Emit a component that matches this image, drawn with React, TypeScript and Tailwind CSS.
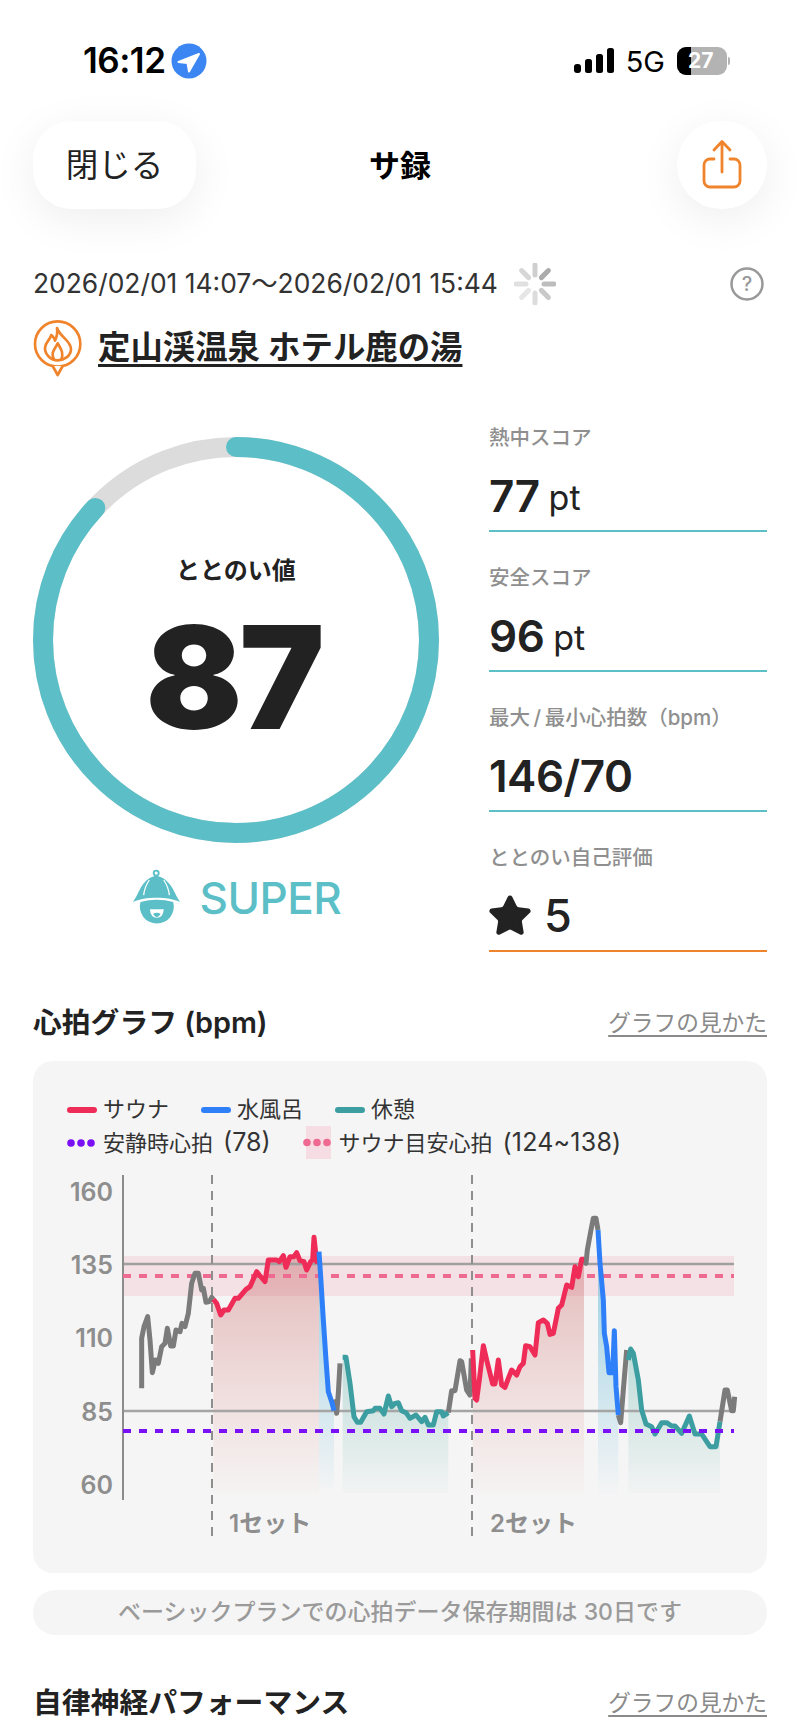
import { Star } from "lucide-react";

type Pt = [number, number];
const parse = (s: string, ox: number, oy: number): Pt[] =>
  s.trim().split(/\s+/).map((t) => {
    const [x, y] = t.split(",").map(Number);
    return [ox + x / 3, oy + y / 3] as Pt;
  });
const str = (p: Pt[]) => p.map((q) => q.join(",")).join(" ");
const area = (p: Pt[], base: number) =>
  str([...p, [p[p.length - 1][0], base], [p[0][0], base]]);

const A = [120, 1220] as const;
const B = [460, 1200] as const;

const gray1 = parse("65,505 65,355 72,320 83,290 90,360 97,458 106,420 115,430 125,380 135,370 142,325 152,378 160,378 168,330 180,335 186,310 195,320 205,280 215,190 225,160 235,160 245,210 250,205 258,247 268,245 275,232 280,238", A[0], A[1]);
const red1 = parse("280,238 290,250 302,285 312,270 325,270 345,235 355,235 378,208 390,200 410,155 418,165 435,185 445,120 470,120 478,125 490,107 498,142 510,110 522,110 530,98 540,122 552,125 560,150 572,125 578,120 582,52 590,125 597,125", A[0], A[1]);
const blue1 = parse("597,95 602,170 610,300 618,420 625,515 635,545 642,572", A[0], A[1]);
const gray2 = parse("642,572 645,545 650,580 655,520 660,430", A[0], A[1]);
const teal1 = parse("668,412 678,412 690,490 702,590 712,607 722,607 740,575 760,572 765,565 780,565 792,582 805,528 815,560 825,550 835,548 845,572 858,578 870,595 888,585 905,605 915,592 925,615 940,615 950,575 965,575 970,588 985,578", A[0], A[1]);
const gray3 = parse("985,578 995,512 1005,512 1020,422 1025,425 1040,510 1050,525 1054,415", A[0], A[1]);
const red2 = parse("38,450 45,595 50,600 58,540 70,437 80,480 98,552 105,552 115,480 125,555 135,562 145,535 155,510 170,525 180,500 190,490 197,437 210,440 225,465 235,368 250,360 262,370 270,403 280,400 290,350 295,325 305,315 320,255 335,262 345,200 355,230 365,178 372,178", B[0], B[1]);
const gray4 = parse("372,178 378,190 382,150 392,95 400,55 408,55 414,90", B[0], B[1]);
const blue2 = parse("414,90 420,190 430,300 433,400 440,440 447,518 458,518 463,392 468,560 475,645", B[0], B[1]);
const gray5 = parse("475,645 482,668 490,570 500,450", B[0], B[1]);
const teal2 = parse("505,480 512,447 520,460 535,540 545,630 558,672 575,680 585,702 605,668 620,668 635,678 645,678 665,700 688,648 705,702 725,702 750,740 768,740 780,665", B[0], B[1]);
const gray6 = parse("780,665 795,570 802,570 815,632 820,632 824,590", B[0], B[1]);

const SPOKES = ["#cfcfcf", "#ababab", "#bdbdbd", "#c9c9c9", "#dcdcdc", "#e6e6e6", "#e0e0e0", "#d6d6d6"];

function Chart() {
  const ticks: [string, number][] = [["160", 1192], ["135", 1265], ["110", 1338], ["85", 1412], ["60", 1485]];
  return (
    <svg className="block w-[734px] h-[395px]" viewBox="33 1165 734 395">
      <defs>
        <linearGradient id="gr" gradientUnits="userSpaceOnUse" x1="0" y1="1260" x2="0" y2="1493">
          <stop offset="0" stopColor="#c05050" stopOpacity="0.36" />
          <stop offset="1" stopColor="#e67878" stopOpacity="0.02" />
        </linearGradient>
        <linearGradient id="gb" gradientUnits="userSpaceOnUse" x1="0" y1="1300" x2="0" y2="1488">
          <stop offset="0" stopColor="#6ebedc" stopOpacity="0.55" />
          <stop offset="1" stopColor="#6ebedc" stopOpacity="0.02" />
        </linearGradient>
        <linearGradient id="gt" gradientUnits="userSpaceOnUse" x1="0" y1="1340" x2="0" y2="1493">
          <stop offset="0" stopColor="#50aaa0" stopOpacity="0.36" />
          <stop offset="1" stopColor="#50aaa0" stopOpacity="0.02" />
        </linearGradient>
      </defs>
      <rect x="123" y="1256" width="611" height="40" fill="#eb5a82" fillOpacity="0.13" />
      <polygon points={area(red1, 1493)} fill="url(#gr)" />
      <polygon points={area(blue1, 1488)} fill="url(#gb)" />
      <polygon points={area(teal1, 1493)} fill="url(#gt)" />
      <polygon points={area(red2, 1493)} fill="url(#gr)" />
      <polygon points={area(blue2, 1493)} fill="url(#gb)" />
      <polygon points={area(teal2, 1493)} fill="url(#gt)" />
      <line x1="123" y1="1264" x2="734" y2="1264" stroke="#a0a0a0" strokeWidth="2.5" />
      <line x1="123" y1="1411" x2="734" y2="1411" stroke="#a5a5a5" strokeWidth="2.5" />
      <line x1="123" y1="1175" x2="123" y2="1500" stroke="#8c8c8c" strokeWidth="2" />
      <line x1="212" y1="1175" x2="212" y2="1542" stroke="#8e8e8e" strokeWidth="2" strokeDasharray="9 7" />
      <line x1="472" y1="1175" x2="472" y2="1542" stroke="#8e8e8e" strokeWidth="2" strokeDasharray="9 7" />
      <line x1="123" y1="1276" x2="734" y2="1276" stroke="#ee6a90" strokeWidth="4" strokeDasharray="8 8" />
      <g fill="none" strokeWidth="5" strokeLinejoin="round">
        {[gray1, gray2, gray3, gray4, gray5, gray6].map((p, i) => (
          <polyline key={i} points={str(p)} stroke="#7b7b7b" />
        ))}
        <polyline points={str(red1)} stroke="#ee2c57" />
        <polyline points={str(red2)} stroke="#ee2c57" />
        <polyline points={str(blue1)} stroke="#2f80f8" />
        <polyline points={str(blue2)} stroke="#2f80f8" />
        <polyline points={str(teal1)} stroke="#3c9ea1" />
        <polyline points={str(teal2)} stroke="#3c9ea1" />
      </g>
      <line x1="123" y1="1431" x2="734" y2="1431" stroke="#7a10f5" strokeWidth="4" strokeDasharray="8 8" />
      {ticks.map(([t, y]) => (
        <text key={t} x="113" y={y + 9} textAnchor="end" fontSize="25" fontWeight="600" fill="#8e8e8e">{t}</text>
      ))}
      <text x="229" y="1532" fontSize="24" fontWeight="600" fill="#8e8e8e">1セット</text>
      <text x="490" y="1532" fontSize="24" fontWeight="600" fill="#8e8e8e">2セット</text>
    </svg>
  );
}

function Stat({ label, value, unit, accent }: { label: string; value: string; unit?: string; accent: string }) {
  return (
    <div className={`h-[107px] flex flex-col border-b-2 ${accent}`}>
      <div className="h-[26px] leading-[26px] text-[20.5px] font-medium text-[#8f8f8f] whitespace-nowrap">{label}</div>
      <div className="mt-[17px] h-[56px] flex items-center text-[#222222]">
        <span className="text-[44px] leading-[56px] font-semibold tracking-[-0.5px]">{value}</span>
        {unit && <span className="ml-[9px] text-[34px] leading-[56px] mt-[4px]">{unit}</span>}
      </div>
    </div>
  );
}

function SectionHead({ title, mt }: { title: string; mt: string }) {
  return (
    <div className={`${mt} h-[40px] px-[33px] flex items-center justify-between`}>
      <div className="text-[28.8px] font-semibold text-[#222222] whitespace-nowrap">{title}</div>
      <div className="text-[22.7px] text-[#8a8a8a] underline underline-offset-[4px] whitespace-nowrap">グラフの見かた</div>
    </div>
  );
}

export default function App() {
  return (
    <div className="w-[800px] h-[1734px] overflow-hidden bg-white text-[#222222] font-['Inter','Noto_Sans_CJK_JP',sans-serif]">
      {/* status bar */}
      <div className="h-[121px] pl-[83px] pr-[70px] flex items-center justify-between">
        <div className="flex items-center">
          <span className="text-[35px] font-semibold text-black tracking-[-0.5px]">16:12</span>
          <svg className="ml-[6px] w-[36px] h-[36px]" viewBox="-18 -18 36 36">
            <circle r="17.5" fill="#3b86f2" />
            <path d="M10 -7 L-10.5 1 L-1.5 2 L0 10.5 Z" fill="white" stroke="white" strokeWidth="2" strokeLinejoin="round" />
          </svg>
        </div>
        <div className="flex items-center">
          <svg className="w-[40px] h-[26px]" viewBox="0 0 40 26">
            <rect x="0" y="16" width="7" height="9" rx="3" fill="black" />
            <rect x="11" y="11" width="7" height="14" rx="2.5" fill="black" />
            <rect x="22" y="6" width="7" height="19" rx="2.5" fill="black" />
            <rect x="33" y="0" width="7" height="25" rx="2.5" fill="black" />
          </svg>
          <span className="ml-[12px] text-[29px] font-normal text-black mt-[2px]">5G</span>
          <div className="ml-[12px] relative w-[50px] h-[28px] rounded-[9px] overflow-hidden bg-[#b3b3b3]">
            <div className="w-[14px] h-full bg-black" />
            <span className="absolute left-[11px] top-0 leading-[28px] text-[21px] font-bold text-white">27</span>
          </div>
          <div className="ml-[1px] w-[2px] h-[8px] rounded-r bg-[#b3b3b3]" />
        </div>
      </div>

      {/* header */}
      <div className="h-[88px] px-[33px] grid grid-cols-[1fr_auto_1fr] items-center">
        <div className="justify-self-start w-[163px] h-[88px] pt-[2px] rounded-[38px] bg-white shadow-[0_10px_45px_rgba(0,0,0,0.07)] flex items-center justify-center text-[32.5px] text-[#222222]">閉じる</div>
        <div className="pt-[2px] text-[31px] font-bold text-black">サ録</div>
        <div className="justify-self-end w-[90px] h-[88px] rounded-full bg-white shadow-[0_10px_45px_rgba(0,0,0,0.07)] flex items-center justify-center">
          <svg className="w-[42px] h-[52px]" viewBox="0 0 42 52" fill="none" stroke="#f0842c" strokeWidth="2.8" strokeLinecap="round" strokeLinejoin="round">
            <path d="M21 33 V3 M13 11 L21 2.5 L29 11" />
            <path d="M13 20 H9 a6 6 0 0 0 -6 6 V42 a6 6 0 0 0 6 6 H33 a6 6 0 0 0 6 -6 V26 a6 6 0 0 0 -6 -6 H29" />
          </svg>
        </div>
      </div>

      {/* date row */}
      <div className="mt-[55px] h-[40px] px-[33px] flex items-center">
        <span className="text-[26.4px] text-[#333333] whitespace-nowrap">2026/02/01 14:07～2026/02/01 15:44</span>
        <svg className="ml-[16px] w-[42px] h-[42px]" viewBox="-21 -21 42 42">
          {SPOKES.map((c, i) => (
            <line key={i} x1="0" y1="-9" x2="0" y2="-19" stroke={c} strokeWidth="5" strokeLinecap="round" transform={`rotate(${i * 45})`} />
          ))}
        </svg>
        <svg className="ml-auto mr-[3px] w-[34px] h-[34px]" viewBox="0 0 34 34">
          <circle cx="17" cy="17" r="15.5" fill="none" stroke="#999999" strokeWidth="2.5" />
          <text x="17" y="24" textAnchor="middle" fontSize="20" fontWeight="500" fill="#999999">?</text>
        </svg>
      </div>

      {/* venue */}
      <div className="mt-[16px] h-[56px] pl-[33px] flex items-center">
        <svg className="w-[50px] h-[58px]" viewBox="38 25 150 174" fill="none" stroke="#f0842c" strokeWidth="8" strokeLinejoin="round">
          <circle cx="112" cy="100" r="68" strokeWidth="8" />
          <path d="M97 166 L112 193 L127 166" strokeWidth="8" fill="white" />
          <path d="M110 52 C118 78 152 90 152 115 C152 137 130 149 112 149 C92 149 74 132 74 112 C74 95 88 90 93 73 C98 78 104 84 104 90 C109 80 112 65 110 52 Z" />
          <path d="M102 149 C88 125 105 115 112 98 C122 115 132 128 122 149" />
        </svg>
        <span className="ml-[15px] text-[32.4px] font-semibold text-[#222222] underline decoration-[3px] underline-offset-[5px] whitespace-nowrap">定山渓温泉 ホテル鹿の湯</span>
      </div>

      {/* score block */}
      <div className="mt-[49px] px-[33px] flex justify-between">
        <div className="w-[406px] pt-[12px] flex flex-col items-center">
          <div className="relative w-[406px] h-[406px] flex flex-col items-center">
            <svg className="absolute inset-0 w-[406px] h-[406px] -rotate-90" viewBox="0 0 406 406" fill="none">
              <circle cx="203" cy="203" r="193" stroke="#dcdcdc" strokeWidth="20" />
              <circle cx="203" cy="203" r="193" stroke="#5cbfc7" strokeWidth="20" strokeLinecap="round" pathLength="100" strokeDasharray="87 100" />
            </svg>
            <div className="relative mt-[116px] h-[36px] leading-[36px] text-[24px] font-semibold text-[#222222]">ととのい値</div>
            <div className="relative mt-[13px] h-[150px] leading-[150px] pr-[5px] text-[143px] font-black text-[#222222] tracking-[-3px]">87</div>
          </div>
          <div className="mt-[26px] h-[56px] flex items-center">
            <svg className="w-[52px] h-[56px]" viewBox="30 25 165 178">
              <circle cx="110" cy="38" r="8" fill="none" stroke="#5cbfc7" strokeWidth="6" />
              <path d="M36 130 C58 104 58 60 110 46 C162 60 166 104 186 130 C150 112 72 112 36 130 Z" fill="#5cbfc7" />
              <path d="M88 60 C78 75 72 90 70 108 M134 60 C144 75 150 90 152 108" stroke="white" strokeWidth="4" fill="none" />
              <path d="M60 130 Q112 116 164 130 A54 54 0 1 1 60 130 Z" fill="#5cbfc7" />
              <path d="M90 153 L134 153 Q132 180 112 180 Q92 180 90 153 Z" fill="white" />
              <path d="M100 168 Q112 160 124 168 Q118 178 112 178 Q106 178 100 168 Z" fill="#5cbfc7" />
            </svg>
            <span className="ml-[17px] mt-[2px] text-[44px] font-medium text-[#5cbfc7] tracking-[-0.5px]">SUPER</span>
          </div>
        </div>
        <div className="w-[278px] flex flex-col gap-[33px]">
          <Stat label="熱中スコア" value="77" unit="pt" accent="border-[#5cc0c8]" />
          <Stat label="安全スコア" value="96" unit="pt" accent="border-[#5cc0c8]" />
          <Stat label={"最大\u2009/\u2009最小心拍数（bpm）"} value="146/70" accent="border-[#5cc0c8]" />
          <div className="h-[107px] flex flex-col border-b-2 border-[#f0842c]">
            <div className="h-[26px] leading-[26px] text-[20.5px] font-medium text-[#8f8f8f]">ととのい自己評価</div>
            <div className="mt-[17px] h-[56px] flex items-center text-[#222222]">
              <Star className="w-[46px] h-[46px] -ml-[2px]" fill="#222222" stroke="#222222" strokeWidth={1.5} />
              <span className="ml-[11px] text-[45px] leading-[56px] font-medium">5</span>
            </div>
          </div>
        </div>
      </div>

      <SectionHead title="心拍グラフ (bpm)" mt="mt-[51px]" />

      {/* chart card */}
      <div className="mt-[18px] mx-[33px] h-[512px] rounded-[20px] bg-[#f5f5f5] overflow-hidden">
        <div className="pt-[32px] px-[34px] text-[22px] text-[#333333]">
          <div className="h-[33px] flex items-center gap-[32px]">
            {[["サウナ", "bg-[#ee2c57]"], ["水風呂", "bg-[#2f80f8]"], ["休憩", "bg-[#3c9ea1]"]].map(([t, c]) => (
              <div key={t} className="flex items-center gap-[6px]">
                <span className={`w-[30px] h-[6px] rounded-full ${c}`} />
                <span>{t}</span>
              </div>
            ))}
          </div>
          <div className="h-[33px] flex items-center gap-[32px]">
            <div className="flex items-center gap-[8px]">
              <svg className="w-[28px] h-[8px]" viewBox="0 0 28 8">
                <circle cx="4" cy="4" r="3.8" fill="#7a10f5" /><circle cx="14" cy="4" r="3.8" fill="#7a10f5" /><circle cx="24" cy="4" r="3.8" fill="#7a10f5" />
              </svg>
              <span className="whitespace-nowrap">安静時心拍<span className="ml-[10px] text-[25px]">(78)</span></span>
            </div>
            <div className="flex items-center gap-[8px]">
              <svg className="w-[28px] h-[33px]" viewBox="0 0 28 33">
                <rect x="3" y="0" width="25" height="33" fill="#f5dde3" />
                <circle cx="4" cy="16.5" r="3.8" fill="#ee6a90" /><circle cx="14" cy="16.5" r="3.8" fill="#ee6a90" /><circle cx="24" cy="16.5" r="3.8" fill="#ee6a90" />
              </svg>
              <span className="whitespace-nowrap">サウナ目安心拍<span className="ml-[10px] text-[25px] tracking-[0.2px]">(124~138)</span></span>
            </div>
          </div>
        </div>
        <div className="mt-[6px]"><Chart /></div>
      </div>

      {/* note */}
      <div className="mt-[17px] mx-[33px] h-[45px] rounded-[22px] bg-[#f5f5f5] flex items-center justify-center text-[23px] font-medium text-[#9a9a9a] whitespace-nowrap">
        ベーシックプランでの心拍データ保存期間は 30日です
      </div>

      <SectionHead title="自律神経パフォーマンス" mt="mt-[48px]" />
    </div>
  );
}
